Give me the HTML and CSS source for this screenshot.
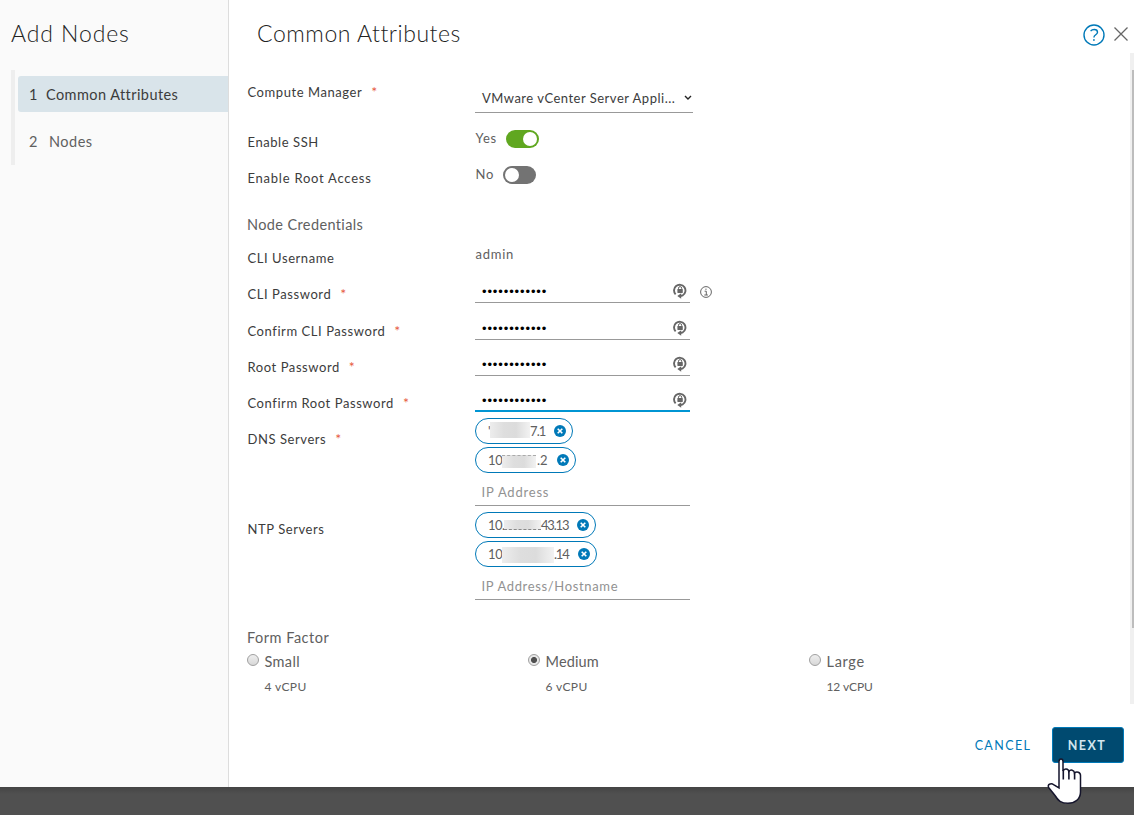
FILE: index.html
```html
<!DOCTYPE html>
<html lang="en">
<head>
<meta charset="utf-8">
<title>Add Nodes</title>
<link rel="stylesheet" href="styles.css">
</head>
<body>
<svg class="defs" width="0" height="0">
  <symbol id="lock" viewBox="0 0 14 16">
    <path d="M2.600 11.400A5.700 5.700 0 1 1 9.800 12.300L7.400 13" fill="none" stroke="#666" stroke-width="1.900"/>
    <path d="M8.200 10.200v5.600L4.300 13z" fill="#666"/>
    <rect x="4.400" y="6" width="5.400" height="3.900" rx=".4" fill="#666"/>
    <path d="M5.500 6.300V5.200a1.600 1.600 0 0 1 3.200 0v1.100" fill="none" stroke="#666"/>
  </symbol>
  <symbol id="remove" viewBox="0 0 12 12">
    <circle cx="6" cy="6" r="6" fill="#0079b8"/>
    <path d="M3.700 3.700l4.600 4.600M8.300 3.700L3.700 8.300" stroke="#fff" stroke-width="1.600"/>
  </symbol>
</svg>
<div class="wizard">
  <aside class="sidebar">
    <h1 class="title">Add Nodes</h1>
    <nav class="steps">
      <a class="step step-active"><span class="num">1</span><span>Common Attributes</span></a>
      <a class="step step-next"><span class="num">2</span><span>Nodes</span></a>
    </nav>
  </aside>
  <main class="main">
    <header class="header">
      <h2 class="page-title">Common Attributes</h2>
      <svg class="help" width="22" height="22" viewBox="0 0 22 22" fill="none" stroke="#0079b8" stroke-width="1.4"><circle cx="11" cy="11" r="10"/><path d="M7.600 7.100C8.500 6 9.800 5.500 11.200 5.500c2 0 3.300 1 3.300 2.700 0 2.600-3.600 2.600-3.600 5.300"/><path d="M10.900 15.200v1.600" stroke-width="1.7"/></svg>
      <svg class="close" width="14" height="14" viewBox="0 0 14 14"><path d="M.5.5l13 13M13.5.5l-13 13" stroke="#666" stroke-width="1.3"/></svg>
    </header>
    <div class="body">
      <form class="form">
        <div class="row row-manager"><label class="label">Compute Manager<i class="star">*</i></label>
          <div class="select"><span>VMware vCenter Server Appli...</span><svg width="8" height="6" viewBox="0 0 8 6"><path d="M1 1l3 3 3-3" fill="none" stroke="#222" stroke-width="1.4"/></svg></div></div>
        <div class="row"><label class="label">Enable SSH</label><div class="value"><span>Yes</span><span class="toggle toggle-on"></span></div></div>
        <div class="row"><label class="label label-wide">Enable Root Access</label><div class="value value-no"><span>No</span><span class="toggle"></span></div></div>
        <h3 class="section">Node Credentials</h3>
        <div class="row"><label class="label">CLI Username</label><div class="value value-admin">admin</div></div>
        <div class="row row-first"><label class="label">CLI Password<i class="star">*</i></label><div class="field-wrap"><div class="password"><span>••••••••••••</span><svg width="14" height="16"><use href="#lock"/></svg></div>
          <svg class="info" width="12" height="12" viewBox="0 0 12 12" fill="none" stroke="#666"><circle cx="6" cy="6" r="5.4"/><path d="M4.600 5.200H6.300V9M4.300 9h3.600M5.300 3.200h1.300" /></svg></div></div>
        <div class="row"><label class="label">Confirm CLI Password<i class="star">*</i></label><div class="password"><span>••••••••••••</span><svg width="14" height="16"><use href="#lock"/></svg></div></div>
        <div class="row"><label class="label">Root Password<i class="star">*</i></label><div class="password"><span>••••••••••••</span><svg width="14" height="16"><use href="#lock"/></svg></div></div>
        <div class="row row-last"><label class="label">Confirm Root Password<i class="star">*</i></label><div class="password password-focus"><span>••••••••••••</span><svg width="14" height="16"><use href="#lock"/></svg></div></div>
        <div class="row row-dns"><label class="label">DNS Servers<i class="star">*</i></label>
          <div class="chips">
            <div class="chip chip-a"><span class="sliver">'</span><span class="mask mask-a"></span><span>7.1</span><svg width="12" height="12"><use href="#remove"/></svg></div>
            <div class="chip chip-b"><span class="lead">10</span><span class="mask mask-b"></span><span>.2</span><svg width="12" height="12"><use href="#remove"/></svg></div>
            <div class="entry">IP Address</div>
          </div></div>
        <div class="row row-ntp"><label class="label">NTP Servers</label>
          <div class="chips">
            <div class="chip chip-c"><span class="lead lead-dot">10.</span><span class="mask mask-c"></span><span>43.13</span><svg width="12" height="12"><use href="#remove"/></svg></div>
            <div class="chip chip-d"><span class="lead">10</span><span class="mask mask-d"></span><span>.14</span><svg width="12" height="12"><use href="#remove"/></svg></div>
            <div class="entry entry-host">IP Address/Hostname</div>
          </div></div>
        <h3 class="section section-form">Form Factor</h3>
        <div class="sizes">
          <div class="size"><span class="radio"></span><div><div class="size-name">Small</div><div class="cpu">4 vCPU</div></div></div>
          <div class="size"><span class="radio radio-on"></span><div><div class="size-name size-medium">Medium</div><div class="cpu">6 vCPU</div></div></div>
          <div class="size"><span class="radio"></span><div><div class="size-name size-large">Large</div><div class="cpu cpu-large">12 vCPU</div></div></div>
        </div>
      </form>
      <div class="track"><div class="thumb"></div></div>
    </div>
    <footer class="footer"><button class="cancel">CANCEL</button><button class="next">NEXT</button></footer>
  </main>
</div>
<svg class="cursor" width="36" height="48" viewBox="0 0 36 48"><path d="M12 31V4.500C12 1 16 1 16 4.500V14C17 11 21.500 11.500 21.800 14.500 23.500 12 27.300 13 27.500 16 29.500 14.300 33.500 15 33.500 18.500V35C33.500 42 28 46.300 21 46.300 14 46.300 11 43.500 8 38.500L2 31C-.5 27.500 4 25.500 7 28L12 31V4.500" fill="#fff" stroke="#15152c" stroke-width="1.5"/><path d="M16.300 13v9.500M21.900 14v8.500M27.600 15.500v7" stroke="#15152c" stroke-width="1.6"/></svg>
</body>
</html>
```

FILE: styles.css
```css
* { box-sizing: border-box; }
body { margin: 0; height: 815px; overflow: hidden; background: linear-gradient(#444 787px, #505050 794px); font-family: Lato, sans-serif; font-size: 13px; color: #606060; }
.defs { position: absolute; }
h1, h2, h3 { margin: 0; font-weight: 400; }
.wizard { display: flex; height: 787px; background: #fff; }
.sidebar { width: 229px; background: #fafafa; border-right: 1px solid #ddd; }
.title, .page-title { font-size: 23px; line-height: 28px; font-weight: 300; color: #222; letter-spacing: .9px; white-space: nowrap; }
.title { padding: 19px 0 0 11px; }
.steps { margin: 23px 0 0 11px; height: 95px; border-left: 4px solid #eee; padding: 6px 0 0 3px; font-size: 14px; }
.step { display: flex; align-items: center; height: 36px; padding-left: 11px; letter-spacing: .7px; }
.step-active { background: #d9e4ea; border-radius: 3px 0 0 3px; color: #3c3c3c; font-size: 14.500px; letter-spacing: .43px; }
.step-active .num { width: 17px; }
.step-next { margin-top: 11px; font-size: 14.500px; letter-spacing: .5px; }
.step-next .num { width: 20px; }
.main { flex: 1; display: flex; flex-direction: column; }
.header { display: flex; height: 53px; padding: 20px 6px 0 28px; }
.page-title { flex: 1; margin-top: -1px; letter-spacing: .55px; }
.help { margin: 4px 9px 0 0; }
.close { margin-top: 7px; }
.body { display: flex; height: 651px; }
.form { flex: 1; padding: 21px 0 0 18px; }
.row { display: grid; grid-template-columns: 228px 1fr; height: 36px; }
.label { padding: 9px 0 0 .5px; line-height: 18px; color: #3c3c3c; letter-spacing: .57px; white-space: nowrap; }
.label-wide { letter-spacing: .76px; }
.star { font-style: normal; color: #e65a40; margin-left: 9px; font-size: 14px; line-height: 1; }
.row-manager { height: 50px; }
.select { width: 218px; height: 39px; border-bottom: 1px solid #999; padding: 15px 1px 0 7px; display: flex; justify-content: space-between; line-height: 18px; color: #3c3c3c; letter-spacing: .5px; white-space: nowrap; }
.select svg { margin-top: 6px; }
.value { display: flex; align-items: flex-start; gap: 9px; padding: 5px 0 0 .5px; line-height: 18px; letter-spacing: .75px; }
.value-admin { padding-top: 5px; letter-spacing: .75px; }
.toggle { width: 33px; height: 18px; margin-top: 1px; border-radius: 9px; background: #737373; padding: 2px; }
.toggle::after { content: ""; display: block; width: 14px; height: 14px; border-radius: 50%; background: #fff; }
.toggle-on { background: #60a720; }
.toggle-on::after { margin-left: 15px; }
.section { height: 44px; padding-top: 20px; font-size: 14.500px; line-height: 18px; letter-spacing: .38px; }
.row-first { height: 37px; }
.row-last { height: 33px; }
.field-wrap { display: flex; gap: 10px; }
.password { display: flex; justify-content: space-between; width: 215px; height: 27px; padding: 7px 3px 0 7px; border-bottom: 1px solid #999; color: #000; font: 13px/16px "Liberation Sans", sans-serif; letter-spacing: .88px; }
.password span { padding-top: 1px; }
.password-focus { border-bottom: 2px solid #0095d3; }
.info { margin-top: 10px; }
.row-dns { height: 94px; }
.row-dns .label { padding-top: 12px; }
.row-ntp { height: 90px; }
.row-ntp .label { padding-top: 8px; }
.chips { display: flex; flex-direction: column; align-items: flex-start; gap: 3px; }
.chip { display: flex; align-items: center; height: 26px; border: 1px solid #0079b8; border-radius: 13px; padding: 0 6px 0 12px; letter-spacing: -.9px; white-space: nowrap; }
.chip svg { margin-left: auto; }
.chip-a { width: 98px; }
.chip-b { width: 101px; letter-spacing: 0; }
.chip-c { width: 121px; letter-spacing: -1.200px; }
.chip-d { width: 122px; letter-spacing: -1.200px; }
.lead { width: 14px; letter-spacing: -.2px; }
.lead-dot { width: 16px; letter-spacing: -.6px; }
.mask { flex: none; background: linear-gradient(90deg, #ededed, #dedede 35%, #dcdcdc 65%, #f2f2f2); }
.sliver { width: 2px; overflow: hidden; letter-spacing: 0; }
.mask-a { width: 40px; height: 16px; margin-top: -3px; }
.mask-b { width: 34px; height: 13px; margin: 3px 1px 0 0; border-top: 1px dashed #aaa; }
.mask-c { width: 37px; height: 10px; margin-top: -1px; border-bottom: 1px dashed #888; }
.mask-d { width: 52px; height: 16px; margin-top: 2px; }
.entry { width: 215px; height: 30px; padding: 7px 0 0 6.500px; line-height: 18px; border-bottom: 1px solid #999; color: #929292; letter-spacing: .8px; }
.entry-host { letter-spacing: .65px; }
.section-form { height: 49px; padding-top: 27px; letter-spacing: .5px; }
.sizes { display: flex; }
.size { display: flex; width: 281px; line-height: 22px; }
.radio { width: 12px; height: 12px; margin: 3px 5.500px 0 0; border: 1px solid #a0a0a0; border-radius: 50%; background: linear-gradient(#eee, #d8d8d8); }
.radio-on { background: radial-gradient(circle, #505050 2.700px, #e8e8e8 3.300px); }
.size-name { font-size: 14.500px; letter-spacing: .35px; }
.size-medium { letter-spacing: .15px; }
.size-large { letter-spacing: .7px; }
.cpu { font-size: 12px; line-height: 27px; letter-spacing: .35px; }
.cpu-large { letter-spacing: -.1px; }
.track { width: 4px; background: #f0f0f0; padding: 17px 0 0 2px; }
.thumb { height: 558px; background: #bdbdbd; }
.footer { display: flex; justify-content: flex-end; padding: 23px 10px 0 0; }
.footer button { height: 36px; border: 1px solid transparent; border-radius: 3px; background: transparent; font: 12.500px Lato, sans-serif; letter-spacing: 1.400px; color: #0079b8; padding: 1px 0 0; }
.footer .cancel { width: 98px; }
.footer .next { width: 72px; background: #004a70; border-color: #0079b8; color: #d3e6ee; font-weight: 700; padding-right: 2px; }
.cursor { position: absolute; left: 1047px; top: 757px; }
```
